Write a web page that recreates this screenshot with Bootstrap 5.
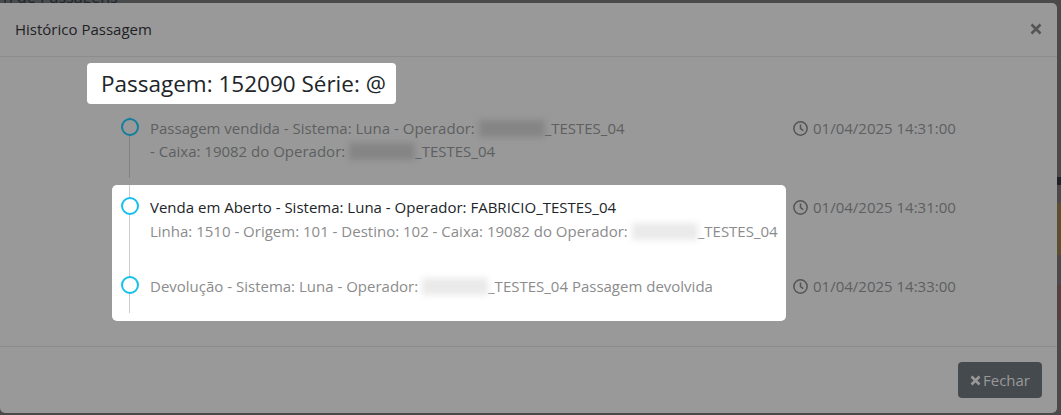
<!DOCTYPE html>
<html lang="pt-BR">
<head>
  <meta charset="UTF-8" />
  <title>Histórico Passagem</title>
  <link rel="stylesheet" href="https://cdn.jsdelivr.net/npm/bootstrap@5.3.0/dist/css/bootstrap.min.css" />
  <style>
    html, body {
      height: 100%;
      overflow: hidden;
    }
    body {
      background-color: #4a4a4a;
      font-family: "Open Sans", sans-serif;
      font-size: 15px;
    }
    .behind-title {
      position: absolute;
      left: 3px;
      top: -15px;
      font-size: 16px;
      color: #1b2630;
    }
    .behind-mark {
      position: absolute;
      right: 0;
      width: 4px;
    }
    .mark-text { top: 177px; height: 8px; background-color: #1c2228; }
    .mark-yellow { top: 203px; height: 52px; background-color: #5a5030; }
    .mark-red { top: 285px; height: 35px; background-color: #54403f; }
    .hist-modal {
      position: relative;
      display: flex;
      flex-direction: column;
      height: 410px;
      margin: 3px 4px 0 0;
      background-color: #999;
      border-radius: 0 5px 5px 5px;
      color: #5d5f61;
    }
    .hist-head {
      height: 54px;
      padding: 0 15px;
      border-bottom: 1px solid #8c8c8c;
    }
    .hist-head h5 {
      margin: 0 0 2px;
      font-size: 15px;
      font-weight: 400;
      color: #1e2124;
    }
    .close-x {
      width: 12px;
      height: 12px;
      margin-bottom: 2px;
    }
    .hist-body {
      flex: 1;
      padding: 6px 0 0 87px;
    }
    .pass-title {
      display: inline-block;
      height: 41px;
      line-height: 41px;
      padding: 0 10px 0 14px;
      margin-bottom: 13px;
      background-color: #fff;
      border-radius: 4px;
      font-size: 22.5px;
      color: #212529;
    }
    .tl-row {
      display: flex;
      align-items: flex-start;
      margin-left: 25px;
    }
    .tl-first {
      height: 68px;
    }
    .tl-box {
      width: 674px;
      height: 136px;
      background-color: #fff;
      border-radius: 5px;
      color: #8c8c8c;
      padding-top: 11px;
    }
    .tl-main {
      position: relative;
      width: 674px;
      padding-left: 38px;
      line-height: 23px;
      white-space: nowrap;
    }
    .tl-tall { height: 79px; }
    .tl-short { height: 46px; }
    .tl-strong { color: #212529; }
    .tl-sub { margin-top: 1px; }
    .tl-line {
      position: absolute;
      left: 17px;
      top: 0;
      bottom: 0;
      width: 1px;
      background-color: #7f8386;
    }
    .tl-first .tl-line { bottom: -15px; }
    .tl-box .tl-line { background-color: #ccc; }
    .tl-box .tl-tall .tl-line { top: -11px; }
    .tl-box .tl-short .tl-line { bottom: 8px; }
    .tl-dot {
      position: absolute;
      left: 9px;
      top: 1px;
      width: 18px;
      height: 18px;
      border: 2.5px solid #16c0ec;
      border-radius: 50%;
      background-color: #fff;
    }
    .tl-first .tl-dot {
      border-color: #137e9e;
      background-color: #999;
    }
    .tl-times {
      padding-left: 7px;
      padding-top: 11px;
    }
    .tl-time {
      display: flex;
      align-items: center;
      gap: 5px;
      height: 23px;
      white-space: nowrap;
      color: #5d5f61;
    }
    .tl-time svg { width: 15px; height: 15px; }
    .time-gap { margin-bottom: 56px; }
    .tl-first .tl-times { padding-top: 0; }
    .blur-name {
      display: inline-block;
      width: 66px;
      height: 17px;
      vertical-align: -3px;
      filter: blur(3px);
    }
    .blur-dark { background-color: #858585; }
    .blur-light { background-color: #eaeaea; }
    .hist-foot {
      height: 67px;
      padding: 15px 15px 0 0;
      border-top: 1px solid #8c8c8c;
    }
    .fechar-btn {
      display: inline-flex;
      align-items: center;
      gap: 2px;
      height: 36px;
      padding: 0 12px;
      border: 0;
      border-radius: 4px;
      background-color: #454a4e;
      color: #999;
      font-size: 15px;
    }
    .fechar-btn svg { width: 11px; height: 11px; }
  </style>
</head>
<body>
  <!-- page behind the backdrop -->
  <div class="behind-title">n de Passagens</div>
  <div class="behind-mark mark-text"></div>
  <div class="behind-mark mark-yellow"></div>
  <div class="behind-mark mark-red"></div>

  <div class="hist-modal">
    <div class="hist-head d-flex align-items-center justify-content-between">
      <h5>Histórico Passagem</h5>
      <svg class="close-x" viewBox="0 0 12 12">
        <path d="M1.5 1.5l9 9M10.5 1.5l-9 9" stroke="#555" stroke-width="2.6" />
      </svg>
    </div>

    <div class="hist-body">
      <div class="pass-title">Passagem: 152090 Série: @</div>

      <div class="tl-row tl-first">
        <div class="tl-main">
          <span class="tl-line"></span><span class="tl-dot"></span>
          <div>Passagem vendida - Sistema: Luna - Operador: <span class="blur-name blur-dark"></span>_TESTES_04</div>
          <div>- Caixa: 19082 do Operador: <span class="blur-name blur-dark"></span>_TESTES_04</div>
        </div>
        <div class="tl-times">
          <div class="tl-time">
            <svg viewBox="0 0 14 14" fill="none" stroke="#555" stroke-width="1.4"><circle cx="7" cy="7" r="6.2"/><path d="M7 3.2V7.2L9.6 9"/></svg>
            01/04/2025 14:31:00
          </div>
        </div>
      </div>

      <div class="tl-row">
        <div class="tl-box">
          <div class="tl-main tl-tall">
            <span class="tl-line"></span><span class="tl-dot"></span>
            <div class="tl-strong">Venda em Aberto - Sistema: Luna - Operador: FABRICIO_TESTES_04</div>
            <div class="tl-sub">Linha: 1510 - Origem: 101 - Destino: 102 - Caixa: 19082 do Operador: <span class="blur-name blur-light"></span>_TESTES_04</div>
          </div>
          <div class="tl-main tl-short">
            <span class="tl-line"></span><span class="tl-dot"></span>
            <div>Devolução - Sistema: Luna - Operador: <span class="blur-name blur-light"></span>_TESTES_04 Passagem devolvida</div>
          </div>
        </div>
        <div class="tl-times">
          <div class="tl-time time-gap">
            <svg viewBox="0 0 14 14" fill="none" stroke="#555" stroke-width="1.4"><circle cx="7" cy="7" r="6.2"/><path d="M7 3.2V7.2L9.6 9"/></svg>
            01/04/2025 14:31:00
          </div>
          <div class="tl-time">
            <svg viewBox="0 0 14 14" fill="none" stroke="#555" stroke-width="1.4"><circle cx="7" cy="7" r="6.2"/><path d="M7 3.2V7.2L9.6 9"/></svg>
            01/04/2025 14:33:00
          </div>
        </div>
      </div>
    </div>

    <div class="hist-foot d-flex justify-content-end align-items-start">
      <button type="button" class="fechar-btn">
        <svg viewBox="0 0 11 11"><path d="M1.5 1.5l8 8M9.5 1.5l-8 8" stroke="#999" stroke-width="2.6" /></svg>
        Fechar
      </button>
    </div>
  </div>

  <script src="https://cdn.jsdelivr.net/npm/bootstrap@5.3.0/dist/js/bootstrap.bundle.min.js"></script>
</body>
</html>
